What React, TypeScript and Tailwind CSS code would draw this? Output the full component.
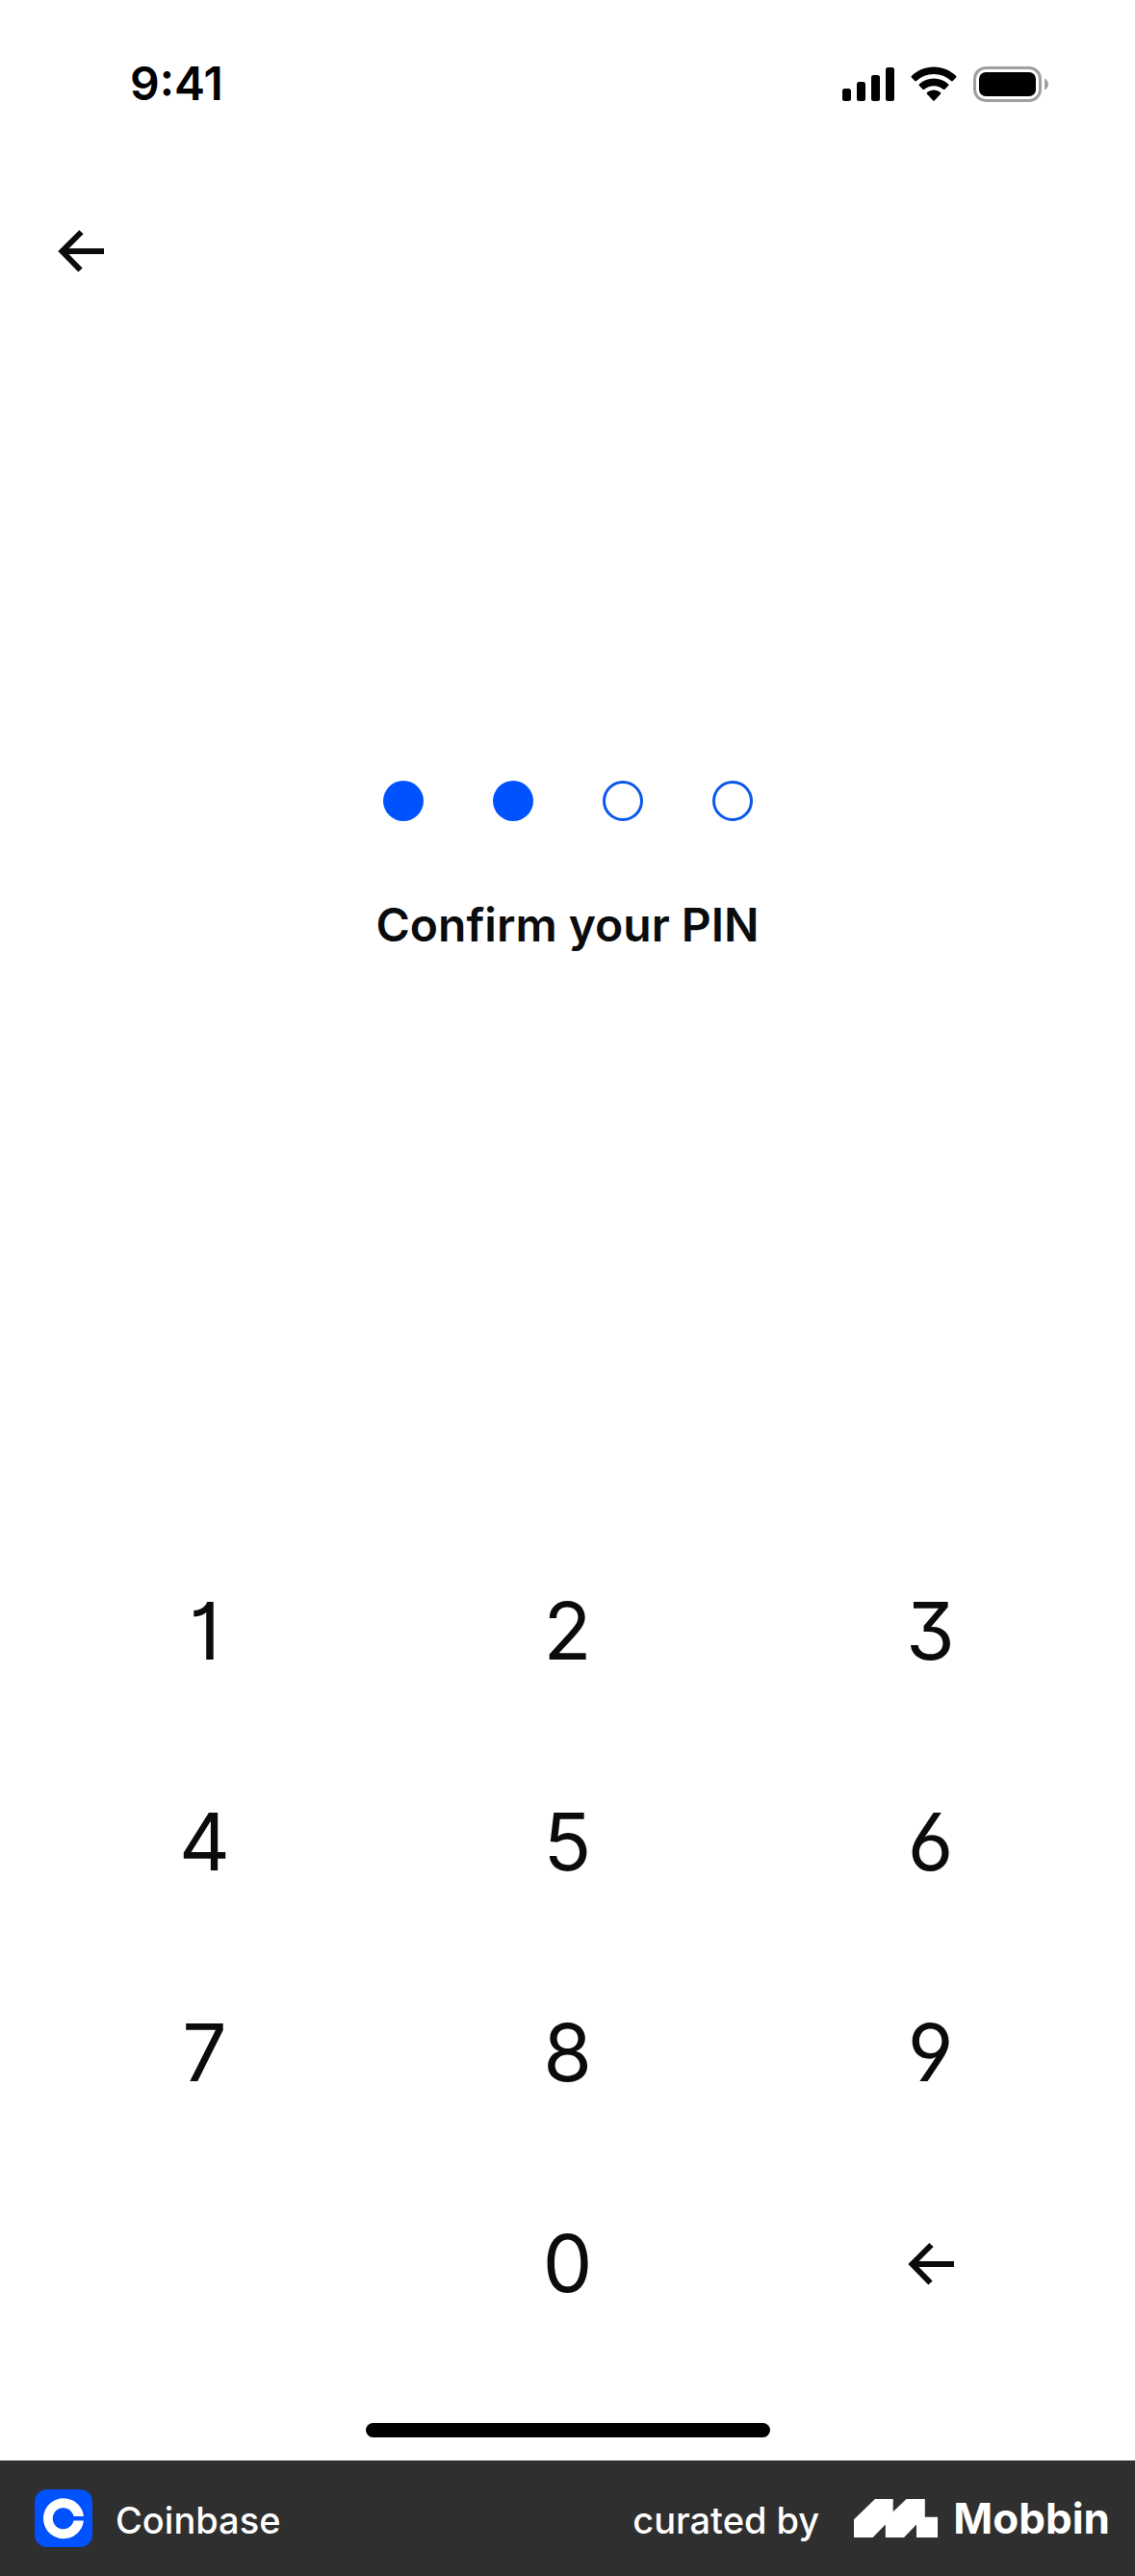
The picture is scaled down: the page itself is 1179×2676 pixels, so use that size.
import { useState } from "react";

const PIN_LENGTH = 4;

function SignalIcon() {
  return (
    <svg width="54" height="36" viewBox="0 0 54 36" aria-hidden="true">
      <rect x="0" y="23" width="9" height="13" rx="2.5" />
      <rect x="15" y="16" width="9" height="20" rx="2.5" />
      <rect x="30" y="9" width="9" height="27" rx="2.5" />
      <rect x="45" y="1" width="9" height="35" rx="2.5" />
    </svg>
  );
}

function WifiIcon() {
  return (
    <svg width="48" height="36" viewBox="0 0 48 36" aria-hidden="true">
      <path d="M24 0.5C33 0.5 41 4 47 9.8c.6.6.6 1.2.1 1.8l-3.3 3.5c-.6.6-1.2.6-1.8 0A26.5 26.5 0 0 0 24 8 26.5 26.5 0 0 0 6 15.1c-.6.6-1.2.6-1.8 0L.9 11.6c-.5-.6-.5-1.2.1-1.8C7 4 15 .5 24 .5Z" />
      <path d="M24 12.500c5.700 0 11 2.100 15 5.700.6.6.6 1.200.1 1.800l-3.600 3.700c-.6.6-1.200.5-1.800 0A14.500 14.500 0 0 0 24 20.200c-3.700 0-7.100 1.300-9.700 3.500-.6.5-1.200.6-1.800 0L8.900 20c-.5-.6-.5-1.200.1-1.800 4-3.600 9.300-5.700 15-5.700Z" />
      <path d="M24 24.500c2.600 0 5 .9 6.900 2.400.6.5.6 1.200.1 1.800l-6.300 6.800c-.4.4-1 .4-1.400 0l-6.300-6.800c-.5-.6-.5-1.300.1-1.800 1.900-1.500 4.300-2.400 6.900-2.400Z" />
    </svg>
  );
}

function BatteryIcon() {
  return (
    <svg width="78" height="37" viewBox="0 0 78 37" aria-hidden="true">
      <rect x="1.500" y="1.500" width="68" height="34" rx="11.500" fill="none" stroke="#9f9f9f" strokeWidth="3" />
      <rect x="6" y="6" width="59" height="25" rx="7" />
      <path d="M74 12.500c2.400 1 4 3.400 4 6s-1.600 5-4 6Z" fill="#9f9f9f" />
    </svg>
  );
}

function ArrowIcon() {
  return (
    <svg width="48" height="48" viewBox="0 0 48 48" fill="none" stroke="#0a0b0d" strokeWidth="6" aria-hidden="true">
      <path d="M24.500 4 4.500 24l19 19.500M5 24h43" />
    </svg>
  );
}

function CoinbaseLogo() {
  return (
    <svg width="60" height="60" viewBox="0 0 60 60" aria-hidden="true">
      <rect width="60" height="60" rx="13" fill="#0052ff" />
      <path
        d="M50.900 28A21 21 0 1 0 50.900 32.500H40.500A11 11 0 1 1 40.500 28Z"
        fill="#fff"
      />
    </svg>
  );
}

function MobbinLogo() {
  return (
    <svg width="87" height="40" viewBox="0 0 87 40" fill="#fff" aria-hidden="true">
      <path d="M0 21.300 22 0H40.700V13.300L54.500 0H73.800V18.700H87V40H65V26.500L52 40H32.800V26.500L19.600 40H0Z" />
    </svg>
  );
}

const keyClass =
  "flex h-[219px] items-center justify-center text-[82px] leading-none text-[#0a0b0d] [font-feature-settings:'cv01','cv03','cv04','cv09']";

export default function App() {
  const [pin, setPin] = useState("12");
  const press = (digit: string) =>
    setPin((current) => (current.length < PIN_LENGTH ? current + digit : current));

  return (
    <div className="flex min-h-screen flex-col bg-white font-['Inter',sans-serif] text-black">
      <header className="flex h-[174px] items-center justify-between pr-[90px] pl-[135px]">
        <time className="text-[48px] leading-none font-semibold">9:41</time>
        <div className="flex items-center gap-[17px]">
          <SignalIcon />
          <WifiIcon />
          <BatteryIcon />
        </div>
      </header>

      <nav className="flex px-12 pt-[51px]">
        <button type="button" aria-label="Back" className="p-3">
          <ArrowIcon />
        </button>
      </nav>

      <main className="flex flex-1 flex-col justify-between">
        <section className="flex flex-col items-center pt-[514px]">
          <div role="img" aria-label={`${pin.length} of ${PIN_LENGTH} digits entered`} className="flex gap-[72px]">
            {Array.from({ length: PIN_LENGTH }, (_, i) => (
              <span
                key={i}
                className={
                  i < pin.length
                    ? "size-[42px] rounded-full bg-[#0052ff]"
                    : "size-[42px] rounded-full border-3 border-[#0a57eb]"
                }
              />
            ))}
          </div>
          <h1 className="mt-20 text-[48px] leading-14 font-semibold text-[#0a0b0d]">Confirm your PIN</h1>
        </section>

        <section aria-label="Keypad" className="grid grid-cols-3 px-6 pb-14">
          {["1", "2", "3", "4", "5", "6", "7", "8", "9"].map((digit) => (
            <button key={digit} type="button" className={keyClass} onClick={() => press(digit)}>
              {digit}
            </button>
          ))}
          <button type="button" className={`col-start-2 ${keyClass}`} onClick={() => press("0")}>
            0
          </button>
          <button
            type="button"
            aria-label="Delete"
            className={keyClass}
            onClick={() => setPin((current) => current.slice(0, -1))}
          >
            <ArrowIcon />
          </button>
        </section>
      </main>

      <div className="mx-auto mb-6 h-[15px] w-[420px] rounded-full bg-black" />

      <footer className="flex h-[120px] items-center justify-between bg-[#2f2f2f] pr-[26px] pl-9 text-white">
        <div className="flex items-center gap-6">
          <CoinbaseLogo />
          <span className="pt-1 text-[38px] leading-none font-medium">Coinbase</span>
        </div>
        <div className="flex items-center">
          <span className="pt-1 text-[38px] leading-none font-medium">curated by</span>
          <span className="ml-9 flex items-center gap-4">
            <MobbinLogo />
            <span className="text-[44px] leading-none font-bold">Mobbin</span>
          </span>
        </div>
      </footer>
    </div>
  );
}
